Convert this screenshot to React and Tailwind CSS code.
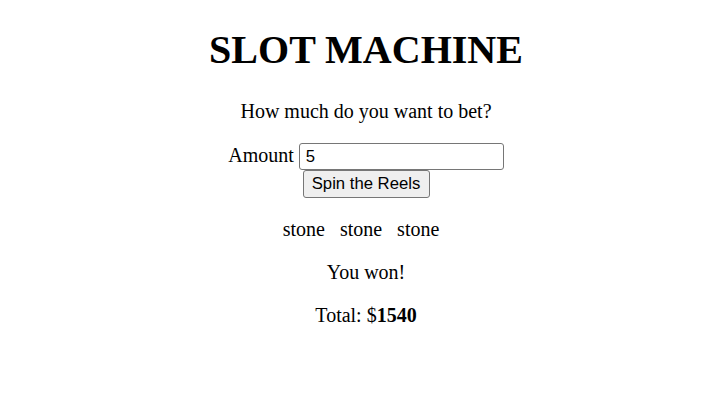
import React, { useState } from 'react';

export default function App() {
  const [amount, setAmount] = useState('5');
  const reels = ['stone', 'stone', 'stone'];

  return (
    <div className="m-[10px] pl-[5px] text-center text-[20px] text-black font-['Liberation_Serif',serif]">
      <h1 className="my-[27px] text-[40px] font-bold leading-[46px]">SLOT MACHINE</h1>
      <p className="my-5 leading-[23px]">How much do you want to bet?</p>
      <form className="leading-[23px]" onSubmit={(e) => e.preventDefault()}>
        <label>
          Amount{' '}
          <input
            type="text"
            value={amount}
            onChange={(e) => setAmount(e.target.value)}
            className="h-[27px] w-[205px] rounded-[3px] border border-[#767676] bg-white px-[6px] text-left text-[16.7px] font-['Liberation_Sans',sans-serif] outline-none"
          />
        </label>
        <br />
        <button
          type="submit"
          className="h-[28px] w-[127px] rounded-[3px] border border-[#767676] bg-[#efefef] text-[16.7px] leading-none font-['Liberation_Sans',sans-serif]"
        >
          Spin the Reels
        </button>
      </form>
      <p className="my-5 pr-[10px] leading-[23px]">
        {reels.map((r, i) => (
          <span key={i} className={i > 0 ? 'ml-[15px]' : ''}>{r}</span>
        ))}
      </p>
      <p className="my-5 leading-[23px]">You won!</p>
      <p className="my-5 leading-[23px]">
        Total: $<b>1540</b>
      </p>
    </div>
  );
}
